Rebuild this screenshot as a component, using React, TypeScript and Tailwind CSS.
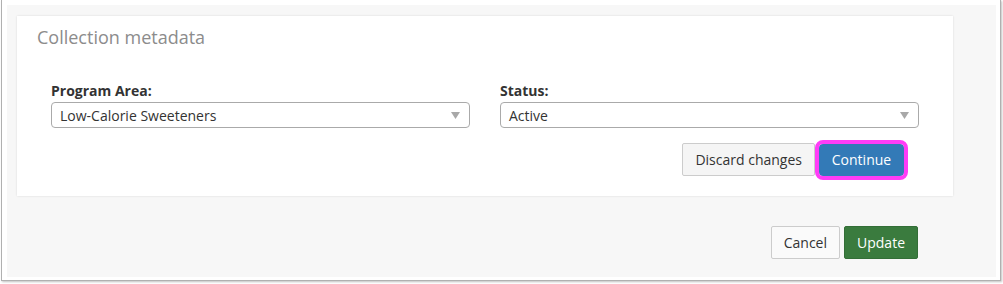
function SelectBox({ label, value }: { label: string; value: string }) {
  return (
    <div className="flex-1 flex flex-col">
      <label className="text-[14px] leading-[18px] font-bold text-[#333] mb-[2px]">{label}</label>
      <div className="h-[26px] border border-[#aaa] rounded-[4px] bg-white flex items-center justify-between pl-[8px] pr-[8px]">
        <span className="text-[14px] text-[#333]">{value}</span>
        <svg width="9" height="7" viewBox="0 0 9 7" className="mr-[1px]">
          <path d="M0 0 L9 0 L4.5 7 Z" fill="#a8a8a8" />
        </svg>
      </div>
    </div>
  );
}

export default function App() {
  return (
    <div className="w-[1003px] h-[284px] bg-white font-['Open_Sans',sans-serif]">
      <div className="ml-px w-[1000px] h-[281px] border-l border-r border-b border-[#b0b0b0] shadow-[1px_1px_2px_rgba(0,0,0,0.25)] pt-[5px] pl-[5px] pr-[4px] pb-[3px]">
        <div className="h-full bg-[#f7f7f7] pt-[11px] pl-[10px] pr-[43px] flex flex-col">
          {/* card */}
          <div className="h-[180px] bg-white shadow-[0_0_2px_rgba(0,0,0,0.12)] pt-[9px] px-[20px]">
            <h2 className="text-[18px] leading-[24px] text-[#8c8c8c]">Collection metadata</h2>
            <div className="mt-[33px] px-[14px] flex flex-col">
              <div className="flex gap-[30px]">
                <SelectBox label="Program Area:" value="Low-Calorie Sweeteners" />
                <SelectBox label="Status:" value="Active" />
              </div>
              <div className="mt-[15px] flex justify-end items-center gap-[4px] pr-[15px]">
                <button className="h-[33px] px-[12px] bg-[#f5f5f5] border border-[#ccc] rounded-[2px] text-[14px] text-[#333]">
                  Discard changes
                </button>
                <button className="h-[32px] w-[85px] bg-[#337ab7] text-[14px] text-white outline-4 outline-[#ff3df7] rounded-[4px]">
                  Continue
                </button>
              </div>
            </div>
          </div>
          <div className="mt-[30px] flex justify-end gap-[4px] pr-[35px]">
            <button className="h-[33px] px-[12px] bg-[#fafafa] border border-[#ccc] rounded-[2px] text-[14px] text-[#333]">
              Cancel
            </button>
            <button className="h-[33px] px-[12px] bg-[#3a7b3e] border border-[#336e37] rounded-[2px] text-[14px] text-white">
              Update
            </button>
          </div>
        </div>
      </div>
    </div>
  );
}
